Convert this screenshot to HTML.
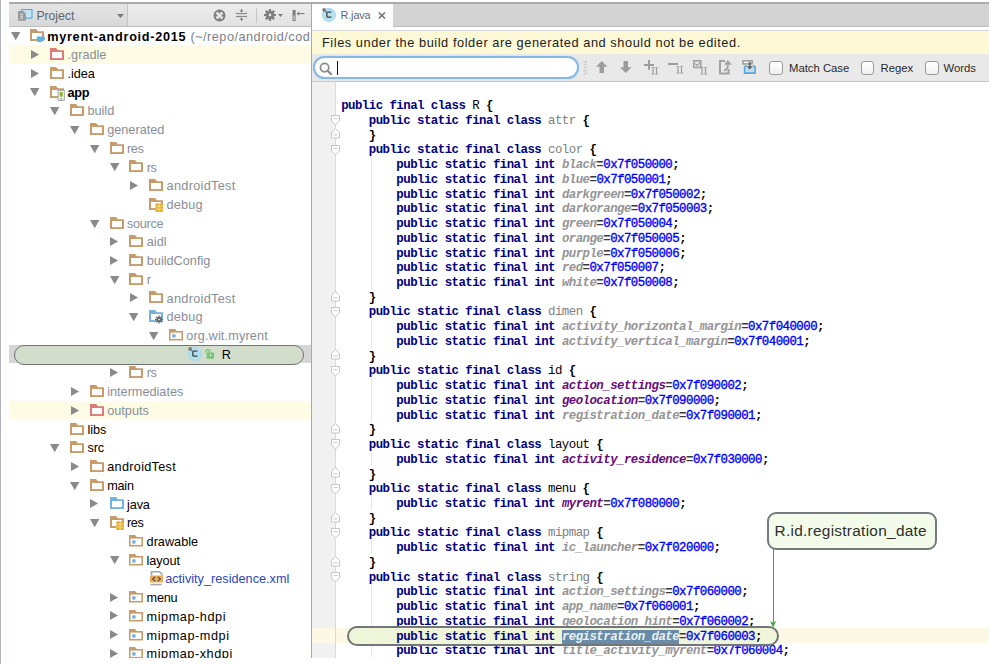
<!DOCTYPE html><html><head><meta charset="utf-8"><style>
*{margin:0;padding:0}
html,body{width:989px;height:664px;overflow:hidden;background:#fff;position:relative}
body{font-family:"Liberation Sans",sans-serif}
div{position:absolute}
.tt{font-size:12.7px;line-height:18.7px;white-space:nowrap}
.code{left:341.2px;top:99.2px;font-family:"Liberation Mono",monospace;font-size:12.4px;letter-spacing:-0.54px;line-height:14.74px;white-space:pre;font-weight:bold;color:#000}
.k{color:#000080}
.cg{color:#808080;font-weight:normal}
.cu{color:#000;font-weight:normal}
.fg{color:#959595;font-style:italic}
.fu{color:#660e7a;font-style:italic}
.fs{color:#e6f2f2;font-style:italic;background:#6a8ba8}
.n{color:#0000ff;font-weight:normal;-webkit-text-stroke:0.35px #0000ff}
.eq{color:#3a3a3a}
</style></head><body>
<div style="left:0;top:0;width:1px;height:664px;background:#aeb2ba"></div>
<div style="left:9px;top:2.2px;width:980px;height:1.8px;background:#ababab"></div>
<div style="left:9px;top:4px;width:302px;height:21.5px;background:linear-gradient(#ececec,#e2e2e2)"></div>
<div style="left:9px;top:4px;width:118px;height:21.5px;background:linear-gradient(#e4e4e4,#d8d8d8)"></div>
<div style="left:127px;top:4px;width:1px;height:21.5px;background:#c4c4c4"></div>
<div style="left:9px;top:25.5px;width:302px;height:1px;background:#bdbdbd"></div>
<svg style="position:absolute;left:18px;top:9px" width="15" height="13" viewBox="0 0 15 13"><rect x="3.5" y="0.5" width="10.5" height="8.6" fill="#c4e2f6" stroke="#5aa9de" stroke-width="1.1"/><path d="M0 2 H5.5 L8 4.5 V11.8 H0 Z" fill="#9a9a9a"/><path d="M2.3 5.2 H5 M2.3 7.2 H5 M2.3 9.2 H5" stroke="#e6e6e6" stroke-width="1"/></svg>
<div style="left:36.4px;top:4.9px;font-size:12.2px;line-height:22px;color:#5d6470">Project</div>
<svg style="position:absolute;left:116.5px;top:14px" width="7" height="4" viewBox="0 0 7 4"><path d="M0 0H7L3.5 4Z" fill="#7a7a7a"/></svg>
<svg style="position:absolute;left:213.3px;top:8.5px" width="13" height="13" viewBox="0 0 13 13"><circle cx="6.5" cy="6.5" r="5.0" fill="none" stroke="#7c7c7c" stroke-width="1.9"/><path d="M6.5 1.5 V4.3 M6.5 8.7 V11.5 M1.5 6.5 H4.3 M8.7 6.5 H11.5" stroke="#7c7c7c" stroke-width="2"/></svg>
<svg style="position:absolute;left:235.6px;top:9.3px" width="11" height="12" viewBox="0 0 11 12"><path d="M0.5 3.6 V4.6 H10.5 V3.6 M0.5 8.4 V7.4 H10.5 V8.4" fill="none" stroke="#7c7c7c" stroke-width="1"/><path d="M5.5 0 V2.4 M5.5 9.6 V12" stroke="#7c7c7c" stroke-width="1"/><path d="M3.4 1.6 H7.6 L5.5 3.6 Z M3.4 10.4 H7.6 L5.5 8.4 Z" fill="#7c7c7c"/></svg>
<div style="left:255.5px;top:7.6px;width:1px;height:15px;background:#c8c8c8"></div>
<svg style="position:absolute;left:264.1px;top:8.9px" width="12" height="12" viewBox="0 0 12 12"><g transform="translate(6 6)" fill="#7c7c7c"><rect x="-1.1" y="-5.9" width="2.2" height="11.8" transform="rotate(0)"/><rect x="-1.1" y="-5.9" width="2.2" height="11.8" transform="rotate(45)"/><rect x="-1.1" y="-5.9" width="2.2" height="11.8" transform="rotate(90)"/><rect x="-1.1" y="-5.9" width="2.2" height="11.8" transform="rotate(135)"/><circle r="4.1"/></g><circle cx="6" cy="6" r="1.4" fill="#e4e4e4"/></svg>
<svg style="position:absolute;left:278px;top:14px" width="5" height="3" viewBox="0 0 5 3"><path d="M0 0H5L2.5 3Z" fill="#7a7a7a"/></svg>
<svg style="position:absolute;left:291.5px;top:9.8px" width="13" height="11" viewBox="0 0 13 11"><rect x="0.6" y="0" width="3" height="11" fill="#7c7c7c"/><rect x="1.6" y="5.5" width="1" height="4.5" fill="#e4e4e4"/><path d="M6 3.6 H12.5" stroke="#7c7c7c" stroke-width="1.1"/><path d="M4.6 3.6 L7.2 1.4 V5.8 Z" fill="#7c7c7c"/></svg>
<svg style="position:absolute;left:10.5px;top:32.3px" width="10" height="9" viewBox="0 0 10 9"><path d="M0 0 H9.4 L4.7 8.2 Z" fill="#8a8a8a"/></svg>
<svg style="position:absolute;left:30.4px;top:29.400000000000002px" width="16" height="17" viewBox="0 0 16 17"><path d="M0 0 H6 L8 2.2 H14 V12 H0 Z" fill="#c69c6d"/><rect x="2" y="4" width="10" height="6.1" fill="#fff"/><path d="M6.8 7.4 H13.2 Q15 7.4 15 9.4 Q15 11.2 13 11.4 Q12 13.2 9.8 13.2 Q6.8 13.2 6.8 10.7 Z" fill="#5db1e0"/></svg>
<div class="tt" style="left:47.20px;top:27.50px;color:#000;font-weight:bold;letter-spacing:0.72px;">myrent-android-2015<span style="color:#7a7f88;font-weight:normal;letter-spacing:0.5px"> (~/repo/android/cod</span></div>
<div style="position:absolute;left:9px;top:45.02px;width:302px;height:18.72px;background:#fffce6"></div>
<svg style="position:absolute;left:30.900000000000002px;top:49.81999999999999px" width="9" height="10" viewBox="0 0 9 10"><path d="M0 0 V9 L8.1 4.5 Z" fill="#8a8a8a"/></svg>
<svg style="position:absolute;left:50.2px;top:48.12px" width="16" height="17" viewBox="0 0 16 17"><path d="M0 0 H6 L8 2.2 H14 V12 H0 Z" fill="#e07a7a"/><rect x="2" y="4" width="10" height="6.1" fill="#fff"/></svg>
<div class="tt" style="left:67.60px;top:46.22px;color:#898e97;font-weight:normal;">.gradle</div>
<svg style="position:absolute;left:30.900000000000002px;top:68.53999999999999px" width="9" height="10" viewBox="0 0 9 10"><path d="M0 0 V9 L8.1 4.5 Z" fill="#8a8a8a"/></svg>
<svg style="position:absolute;left:50.2px;top:66.83999999999999px" width="16" height="17" viewBox="0 0 16 17"><path d="M0 0 H6 L8 2.2 H14 V12 H0 Z" fill="#c69c6d"/><rect x="2" y="4" width="10" height="6.1" fill="#fff"/></svg>
<div class="tt" style="left:67.60px;top:64.94px;color:#000;font-weight:normal;letter-spacing:-0.1px;">.idea</div>
<svg style="position:absolute;left:30.3px;top:88.46px" width="10" height="9" viewBox="0 0 10 9"><path d="M0 0 H9.4 L4.7 8.2 Z" fill="#8a8a8a"/></svg>
<svg style="position:absolute;left:50.2px;top:85.55999999999999px" width="16" height="17" viewBox="0 0 16 17"><path d="M0 0 H6 L8 2.2 H14 V12 H0 Z" fill="#c69c6d"/><rect x="2" y="4" width="10" height="6.1" fill="#fff"/><rect x="8.1" y="4.3" width="6.2" height="10" rx="0.6" fill="#fff" stroke="#aaa" stroke-width="1.2"/><rect x="9.6" y="5.9" width="3.2" height="4.8" fill="#8db33a"/><rect x="10.2" y="12.2" width="2" height="1" fill="#777"/></svg>
<div class="tt" style="left:67.60px;top:83.66px;color:#000;font-weight:bold;letter-spacing:-0.35px;">app</div>
<svg style="position:absolute;left:50.10000000000001px;top:107.17999999999999px" width="10" height="9" viewBox="0 0 10 9"><path d="M0 0 H9.4 L4.7 8.2 Z" fill="#8a8a8a"/></svg>
<svg style="position:absolute;left:70.0px;top:104.27999999999999px" width="16" height="17" viewBox="0 0 16 17"><path d="M0 0 H6 L8 2.2 H14 V12 H0 Z" fill="#c69c6d"/><rect x="2" y="4" width="10" height="6.1" fill="#fff"/></svg>
<div class="tt" style="left:87.40px;top:102.38px;color:#898e97;font-weight:normal;">build</div>
<svg style="position:absolute;left:69.9px;top:125.89999999999999px" width="10" height="9" viewBox="0 0 10 9"><path d="M0 0 H9.4 L4.7 8.2 Z" fill="#8a8a8a"/></svg>
<svg style="position:absolute;left:89.80000000000001px;top:122.99999999999999px" width="16" height="17" viewBox="0 0 16 17"><path d="M0 0 H6 L8 2.2 H14 V12 H0 Z" fill="#c69c6d"/><rect x="2" y="4" width="10" height="6.1" fill="#fff"/></svg>
<div class="tt" style="left:107.20px;top:121.10px;color:#898e97;font-weight:normal;">generated</div>
<svg style="position:absolute;left:89.7px;top:144.62px" width="10" height="9" viewBox="0 0 10 9"><path d="M0 0 H9.4 L4.7 8.2 Z" fill="#8a8a8a"/></svg>
<svg style="position:absolute;left:109.6px;top:141.72px" width="16" height="17" viewBox="0 0 16 17"><path d="M0 0 H6 L8 2.2 H14 V12 H0 Z" fill="#c69c6d"/><rect x="2" y="4" width="10" height="6.1" fill="#fff"/></svg>
<div class="tt" style="left:127.00px;top:139.82px;color:#898e97;font-weight:normal;letter-spacing:-0.4px;">res</div>
<svg style="position:absolute;left:109.5px;top:163.34px" width="10" height="9" viewBox="0 0 10 9"><path d="M0 0 H9.4 L4.7 8.2 Z" fill="#8a8a8a"/></svg>
<svg style="position:absolute;left:129.4px;top:160.44px" width="16" height="17" viewBox="0 0 16 17"><path d="M0 0 H6 L8 2.2 H14 V12 H0 Z" fill="#c69c6d"/><rect x="2" y="4" width="10" height="6.1" fill="#fff"/></svg>
<div class="tt" style="left:146.80px;top:158.54px;color:#898e97;font-weight:normal;letter-spacing:-0.5px;">rs</div>
<svg style="position:absolute;left:129.90000000000003px;top:180.86px" width="9" height="10" viewBox="0 0 9 10"><path d="M0 0 V9 L8.1 4.5 Z" fill="#8a8a8a"/></svg>
<svg style="position:absolute;left:149.20000000000002px;top:179.16px" width="16" height="17" viewBox="0 0 16 17"><path d="M0 0 H6 L8 2.2 H14 V12 H0 Z" fill="#c69c6d"/><rect x="2" y="4" width="10" height="6.1" fill="#fff"/></svg>
<div class="tt" style="left:166.60px;top:177.26px;color:#898e97;font-weight:normal;letter-spacing:0.3px;">androidTest</div>
<svg style="position:absolute;left:149.20000000000002px;top:197.88px" width="16" height="17" viewBox="0 0 16 17"><path d="M0 0 H6 L8 2.2 H14 V12 H0 Z" fill="#c69c6d"/><rect x="2" y="4" width="10" height="6.1" fill="#fff"/><rect x="6.4" y="5.4" width="7.4" height="8.6" fill="#e6ae28"/><path d="M6.4 8.2 H13.8 M6.4 11.1 H13.8 M10.1 5.4 V14" stroke="#f8e49a" stroke-width="0.8"/></svg>
<div class="tt" style="left:166.60px;top:195.98px;color:#898e97;font-weight:normal;letter-spacing:0.2px;">debug</div>
<svg style="position:absolute;left:89.7px;top:219.5px" width="10" height="9" viewBox="0 0 10 9"><path d="M0 0 H9.4 L4.7 8.2 Z" fill="#8a8a8a"/></svg>
<svg style="position:absolute;left:109.6px;top:216.6px" width="16" height="17" viewBox="0 0 16 17"><path d="M0 0 H6 L8 2.2 H14 V12 H0 Z" fill="#c69c6d"/><rect x="2" y="4" width="10" height="6.1" fill="#fff"/></svg>
<div class="tt" style="left:127.00px;top:214.70px;color:#898e97;font-weight:normal;letter-spacing:-0.3px;">source</div>
<svg style="position:absolute;left:110.1px;top:237.02px" width="9" height="10" viewBox="0 0 9 10"><path d="M0 0 V9 L8.1 4.5 Z" fill="#8a8a8a"/></svg>
<svg style="position:absolute;left:129.4px;top:235.32px" width="16" height="17" viewBox="0 0 16 17"><path d="M0 0 H6 L8 2.2 H14 V12 H0 Z" fill="#c69c6d"/><rect x="2" y="4" width="10" height="6.1" fill="#fff"/></svg>
<div class="tt" style="left:146.80px;top:233.42px;color:#898e97;font-weight:normal;">aidl</div>
<svg style="position:absolute;left:110.1px;top:255.74px" width="9" height="10" viewBox="0 0 9 10"><path d="M0 0 V9 L8.1 4.5 Z" fill="#8a8a8a"/></svg>
<svg style="position:absolute;left:129.4px;top:254.04px" width="16" height="17" viewBox="0 0 16 17"><path d="M0 0 H6 L8 2.2 H14 V12 H0 Z" fill="#c69c6d"/><rect x="2" y="4" width="10" height="6.1" fill="#fff"/></svg>
<div class="tt" style="left:146.80px;top:252.14px;color:#898e97;font-weight:normal;">buildConfig</div>
<svg style="position:absolute;left:109.5px;top:275.65999999999997px" width="10" height="9" viewBox="0 0 10 9"><path d="M0 0 H9.4 L4.7 8.2 Z" fill="#8a8a8a"/></svg>
<svg style="position:absolute;left:129.4px;top:272.76px" width="16" height="17" viewBox="0 0 16 17"><path d="M0 0 H6 L8 2.2 H14 V12 H0 Z" fill="#c69c6d"/><rect x="2" y="4" width="10" height="6.1" fill="#fff"/></svg>
<div class="tt" style="left:146.80px;top:270.86px;color:#898e97;font-weight:normal;">r</div>
<svg style="position:absolute;left:129.90000000000003px;top:293.18px" width="9" height="10" viewBox="0 0 9 10"><path d="M0 0 V9 L8.1 4.5 Z" fill="#8a8a8a"/></svg>
<svg style="position:absolute;left:149.20000000000002px;top:291.48px" width="16" height="17" viewBox="0 0 16 17"><path d="M0 0 H6 L8 2.2 H14 V12 H0 Z" fill="#c69c6d"/><rect x="2" y="4" width="10" height="6.1" fill="#fff"/></svg>
<div class="tt" style="left:166.60px;top:289.58px;color:#898e97;font-weight:normal;letter-spacing:0.3px;">androidTest</div>
<svg style="position:absolute;left:129.3px;top:313.09999999999997px" width="10" height="9" viewBox="0 0 10 9"><path d="M0 0 H9.4 L4.7 8.2 Z" fill="#8a8a8a"/></svg>
<svg style="position:absolute;left:149.20000000000002px;top:310.2px" width="16" height="17" viewBox="0 0 16 17"><path d="M0 0 H6 L8 2.2 H14 V12 H0 Z" fill="#74b4dc"/><rect x="2" y="4" width="10" height="6.1" fill="#fff"/><g transform="translate(10 9.5)" fill="#666"><rect x="-0.7" y="-4" width="1.4" height="8" transform="rotate(0)"/><rect x="-0.7" y="-4" width="1.4" height="8" transform="rotate(45)"/><rect x="-0.7" y="-4" width="1.4" height="8" transform="rotate(90)"/><rect x="-0.7" y="-4" width="1.4" height="8" transform="rotate(135)"/><circle r="2.2"/></g><circle cx="10" cy="9.5" r="0.8" fill="#fff"/></svg>
<div class="tt" style="left:166.60px;top:308.30px;color:#898e97;font-weight:normal;letter-spacing:0.2px;">debug</div>
<svg style="position:absolute;left:149.1px;top:331.82px" width="10" height="9" viewBox="0 0 10 9"><path d="M0 0 H9.4 L4.7 8.2 Z" fill="#8a8a8a"/></svg>
<svg style="position:absolute;left:168.7px;top:329.21999999999997px" width="14" height="12" viewBox="0 0 14 12"><path d="M0 0 H6 L7.8 2 H14 V11.5 H0 Z" fill="#c69c6d"/><rect x="1.6" y="3.6" width="10.8" height="6.3" fill="#fff"/><circle cx="4.9" cy="6.9" r="1.9" fill="#74b2dc"/></svg>
<div class="tt" style="left:186.20px;top:327.02px;color:#898e97;font-weight:normal;letter-spacing:0.14px;">org.wit.myrent</div>
<div style="position:absolute;left:9px;top:344.54px;width:302px;height:18.72px;background:#d6d6d6"></div>
<div style="position:absolute;left:13.5px;top:345.34px;width:290px;height:19.7px;box-sizing:border-box;border:1.9px solid #6f7377;border-radius:10px;background:#d3ddcc"></div>
<svg style="position:absolute;left:188.0px;top:347.34000000000003px" width="15" height="15" viewBox="0 0 15 15"><circle cx="6.9" cy="6.9" r="6.9" fill="#b2e0ef"/><circle cx="6.9" cy="6.9" r="6.5" fill="none" stroke="#a2d4ee" stroke-width="0.8"/><path d="M9.4 4.05 H5.7 Q4.85 4.05 4.85 4.9 V8.3 Q4.85 9.15 5.7 9.15 H9.4" fill="none" stroke="#404040" stroke-width="1.3"/><path d="M2 1.8 L4.6 4.4" stroke="#6a6a6a" stroke-width="1.1"/><circle cx="2.1" cy="1.9" r="1.8" fill="#7a7a7a"/></svg>
<svg style="position:absolute;left:205.4px;top:349.44px" width="10" height="10" viewBox="0 0 10 10"><path d="M1.2 3.6 V2.4 Q1.2 0.8 2.9 0.8 Q4.6 0.8 4.6 2.4 V3.8" fill="none" stroke="#78c678" stroke-width="1.5"/><rect x="1.6" y="3.5" width="7.5" height="6.2" rx="0.6" fill="#78c678"/><path d="M4.4 5.6 H6.4 L5.4 7.4 Z" fill="#e8f4e8"/></svg>
<div class="tt" style="left:221.80px;top:345.74px;color:#000;font-weight:normal;">R</div>
<svg style="position:absolute;left:110.1px;top:368.06px" width="9" height="10" viewBox="0 0 9 10"><path d="M0 0 V9 L8.1 4.5 Z" fill="#8a8a8a"/></svg>
<svg style="position:absolute;left:129.4px;top:366.36px" width="16" height="17" viewBox="0 0 16 17"><path d="M0 0 H6 L8 2.2 H14 V12 H0 Z" fill="#c69c6d"/><rect x="2" y="4" width="10" height="6.1" fill="#fff"/></svg>
<div class="tt" style="left:146.80px;top:364.46px;color:#898e97;font-weight:normal;letter-spacing:-0.5px;">rs</div>
<svg style="position:absolute;left:70.5px;top:386.78px" width="9" height="10" viewBox="0 0 9 10"><path d="M0 0 V9 L8.1 4.5 Z" fill="#8a8a8a"/></svg>
<svg style="position:absolute;left:89.80000000000001px;top:385.08px" width="16" height="17" viewBox="0 0 16 17"><path d="M0 0 H6 L8 2.2 H14 V12 H0 Z" fill="#c69c6d"/><rect x="2" y="4" width="10" height="6.1" fill="#fff"/></svg>
<div class="tt" style="left:107.20px;top:383.18px;color:#898e97;font-weight:normal;">intermediates</div>
<div style="position:absolute;left:9px;top:400.70px;width:302px;height:18.72px;background:#fffce6"></div>
<svg style="position:absolute;left:70.5px;top:405.5px" width="9" height="10" viewBox="0 0 9 10"><path d="M0 0 V9 L8.1 4.5 Z" fill="#8a8a8a"/></svg>
<svg style="position:absolute;left:89.80000000000001px;top:403.8px" width="16" height="17" viewBox="0 0 16 17"><path d="M0 0 H6 L8 2.2 H14 V12 H0 Z" fill="#e07a7a"/><rect x="2" y="4" width="10" height="6.1" fill="#fff"/></svg>
<div class="tt" style="left:107.20px;top:401.90px;color:#898e97;font-weight:normal;">outputs</div>
<svg style="position:absolute;left:70.0px;top:422.52000000000004px" width="16" height="17" viewBox="0 0 16 17"><path d="M0 0 H6 L8 2.2 H14 V12 H0 Z" fill="#c69c6d"/><rect x="2" y="4" width="10" height="6.1" fill="#fff"/></svg>
<div class="tt" style="left:87.40px;top:420.62px;color:#000;font-weight:normal;">libs</div>
<svg style="position:absolute;left:50.10000000000001px;top:444.14px" width="10" height="9" viewBox="0 0 10 9"><path d="M0 0 H9.4 L4.7 8.2 Z" fill="#8a8a8a"/></svg>
<svg style="position:absolute;left:70.0px;top:441.24px" width="16" height="17" viewBox="0 0 16 17"><path d="M0 0 H6 L8 2.2 H14 V12 H0 Z" fill="#c69c6d"/><rect x="2" y="4" width="10" height="6.1" fill="#fff"/></svg>
<div class="tt" style="left:87.40px;top:439.34px;color:#000;font-weight:normal;letter-spacing:-0.1px;">src</div>
<svg style="position:absolute;left:70.5px;top:461.65999999999997px" width="9" height="10" viewBox="0 0 9 10"><path d="M0 0 V9 L8.1 4.5 Z" fill="#8a8a8a"/></svg>
<svg style="position:absolute;left:89.80000000000001px;top:459.96px" width="16" height="17" viewBox="0 0 16 17"><path d="M0 0 H6 L8 2.2 H14 V12 H0 Z" fill="#c69c6d"/><rect x="2" y="4" width="10" height="6.1" fill="#fff"/></svg>
<div class="tt" style="left:107.20px;top:458.06px;color:#000;font-weight:normal;letter-spacing:0.3px;">androidTest</div>
<svg style="position:absolute;left:69.9px;top:481.58px" width="10" height="9" viewBox="0 0 10 9"><path d="M0 0 H9.4 L4.7 8.2 Z" fill="#8a8a8a"/></svg>
<svg style="position:absolute;left:89.80000000000001px;top:478.68px" width="16" height="17" viewBox="0 0 16 17"><path d="M0 0 H6 L8 2.2 H14 V12 H0 Z" fill="#c69c6d"/><rect x="2" y="4" width="10" height="6.1" fill="#fff"/></svg>
<div class="tt" style="left:107.20px;top:476.78px;color:#000;font-weight:normal;letter-spacing:-0.24px;">main</div>
<svg style="position:absolute;left:90.3px;top:499.1px" width="9" height="10" viewBox="0 0 9 10"><path d="M0 0 V9 L8.1 4.5 Z" fill="#8a8a8a"/></svg>
<svg style="position:absolute;left:109.6px;top:497.40000000000003px" width="16" height="17" viewBox="0 0 16 17"><path d="M0 0 H6 L8 2.2 H14 V12 H0 Z" fill="#74b4dc"/><rect x="2" y="4" width="10" height="6.1" fill="#fff"/></svg>
<div class="tt" style="left:127.00px;top:495.50px;color:#000;font-weight:normal;letter-spacing:-0.12px;">java</div>
<svg style="position:absolute;left:89.7px;top:519.02px" width="10" height="9" viewBox="0 0 10 9"><path d="M0 0 H9.4 L4.7 8.2 Z" fill="#8a8a8a"/></svg>
<svg style="position:absolute;left:109.6px;top:516.12px" width="16" height="17" viewBox="0 0 16 17"><path d="M0 0 H6 L8 2.2 H14 V12 H0 Z" fill="#c69c6d"/><rect x="2" y="4" width="10" height="6.1" fill="#fff"/><rect x="6.4" y="5.4" width="7.4" height="8.6" fill="#e6ae28"/><path d="M6.4 8.2 H13.8 M6.4 11.1 H13.8 M10.1 5.4 V14" stroke="#f8e49a" stroke-width="0.8"/></svg>
<div class="tt" style="left:127.00px;top:514.22px;color:#000;font-weight:normal;letter-spacing:-0.4px;">res</div>
<svg style="position:absolute;left:129.1px;top:535.1399999999999px" width="14" height="12" viewBox="0 0 14 12"><path d="M0 0 H6 L7.8 2 H14 V11.5 H0 Z" fill="#c69c6d"/><rect x="1.6" y="3.6" width="10.8" height="6.3" fill="#fff"/><circle cx="4.9" cy="6.9" r="1.9" fill="#74b2dc"/></svg>
<div class="tt" style="left:146.60px;top:532.94px;color:#000;font-weight:normal;">drawable</div>
<svg style="position:absolute;left:109.5px;top:556.4599999999999px" width="10" height="9" viewBox="0 0 10 9"><path d="M0 0 H9.4 L4.7 8.2 Z" fill="#8a8a8a"/></svg>
<svg style="position:absolute;left:129.1px;top:553.8599999999999px" width="14" height="12" viewBox="0 0 14 12"><path d="M0 0 H6 L7.8 2 H14 V11.5 H0 Z" fill="#c69c6d"/><rect x="1.6" y="3.6" width="10.8" height="6.3" fill="#fff"/><circle cx="4.9" cy="6.9" r="1.9" fill="#74b2dc"/></svg>
<div class="tt" style="left:146.60px;top:551.66px;color:#000;font-weight:normal;letter-spacing:-0.1px;">layout</div>
<svg style="position:absolute;left:150.20000000000002px;top:570.78px" width="14" height="15" viewBox="0 0 14 15"><path d="M1.5 0.8 H9.5 L12 3.3 V4.5" fill="none" stroke="#a6a6a6" stroke-width="1.6"/><path d="M1.5 0 V4.5" stroke="#a6a6a6" stroke-width="1.6"/><rect x="0" y="4.5" width="13" height="7" fill="#f1ad56"/><path d="M5.2 5.7 L2.7 8 L5.2 10.3 M7.8 5.7 L10.3 8 L7.8 10.3" fill="none" stroke="#585858" stroke-width="1.4"/><rect x="0.5" y="12.8" width="11" height="1.5" fill="#a6a6a6"/></svg>
<div class="tt" style="left:165.20px;top:570.38px;color:#2a46b8;font-weight:normal;">activity_residence.xml</div>
<svg style="position:absolute;left:110.1px;top:592.6999999999998px" width="9" height="10" viewBox="0 0 9 10"><path d="M0 0 V9 L8.1 4.5 Z" fill="#8a8a8a"/></svg>
<svg style="position:absolute;left:129.1px;top:591.2999999999998px" width="14" height="12" viewBox="0 0 14 12"><path d="M0 0 H6 L7.8 2 H14 V11.5 H0 Z" fill="#c69c6d"/><rect x="1.6" y="3.6" width="10.8" height="6.3" fill="#fff"/><circle cx="4.9" cy="6.9" r="1.9" fill="#74b2dc"/></svg>
<div class="tt" style="left:146.60px;top:589.10px;color:#000;font-weight:normal;letter-spacing:-0.25px;">menu</div>
<svg style="position:absolute;left:110.1px;top:611.4199999999998px" width="9" height="10" viewBox="0 0 9 10"><path d="M0 0 V9 L8.1 4.5 Z" fill="#8a8a8a"/></svg>
<svg style="position:absolute;left:129.1px;top:610.0199999999999px" width="14" height="12" viewBox="0 0 14 12"><path d="M0 0 H6 L7.8 2 H14 V11.5 H0 Z" fill="#c69c6d"/><rect x="1.6" y="3.6" width="10.8" height="6.3" fill="#fff"/><circle cx="4.9" cy="6.9" r="1.9" fill="#74b2dc"/></svg>
<div class="tt" style="left:146.60px;top:607.82px;color:#000;font-weight:normal;letter-spacing:0.56px;">mipmap-hdpi</div>
<svg style="position:absolute;left:110.1px;top:630.1399999999999px" width="9" height="10" viewBox="0 0 9 10"><path d="M0 0 V9 L8.1 4.5 Z" fill="#8a8a8a"/></svg>
<svg style="position:absolute;left:129.1px;top:628.7399999999999px" width="14" height="12" viewBox="0 0 14 12"><path d="M0 0 H6 L7.8 2 H14 V11.5 H0 Z" fill="#c69c6d"/><rect x="1.6" y="3.6" width="10.8" height="6.3" fill="#fff"/><circle cx="4.9" cy="6.9" r="1.9" fill="#74b2dc"/></svg>
<div class="tt" style="left:146.60px;top:626.54px;color:#000;font-weight:normal;letter-spacing:0.56px;">mipmap-mdpi</div>
<svg style="position:absolute;left:110.1px;top:648.8599999999999px" width="9" height="10" viewBox="0 0 9 10"><path d="M0 0 V9 L8.1 4.5 Z" fill="#8a8a8a"/></svg>
<svg style="position:absolute;left:129.1px;top:647.4599999999999px" width="14" height="12" viewBox="0 0 14 12"><path d="M0 0 H6 L7.8 2 H14 V11.5 H0 Z" fill="#c69c6d"/><rect x="1.6" y="3.6" width="10.8" height="6.3" fill="#fff"/><circle cx="4.9" cy="6.9" r="1.9" fill="#74b2dc"/></svg>
<div class="tt" style="left:146.60px;top:645.26px;color:#000;font-weight:normal;letter-spacing:0.54px;">mipmap-xhdpi</div>
<div style="left:311px;top:4px;width:1px;height:654px;background:#a8a8a8"></div>
<div style="left:312px;top:4px;width:677px;height:22px;background:#d3d3d3"></div>
<div style="left:393px;top:25.5px;width:596px;height:1px;background:#bcbcbc"></div>
<div style="left:312px;top:4px;width:81px;height:26px;background:#fff"></div>
<svg style="position:absolute;left:322.1px;top:7.9px" width="15" height="15" viewBox="0 0 15 15"><circle cx="6.9" cy="6.9" r="6.9" fill="#b6e0f3"/><circle cx="6.9" cy="6.9" r="6.5" fill="none" stroke="#a2d4ee" stroke-width="0.8"/><path d="M9.4 4.05 H5.7 Q4.85 4.05 4.85 4.9 V8.3 Q4.85 9.15 5.7 9.15 H9.4" fill="none" stroke="#404040" stroke-width="1.3"/><path d="M2 1.8 L4.6 4.4" stroke="#6a6a6a" stroke-width="1.1"/><circle cx="2.1" cy="1.9" r="1.8" fill="#7a7a7a"/></svg>
<div style="left:340.5px;top:4.9px;font-size:10.8px;line-height:21px;color:#5b6678;letter-spacing:-0.1px">R.java</div>
<svg style="position:absolute;left:378px;top:12px" width="8" height="7" viewBox="0 0 8 7"><path d="M0.8 0.5 L7 6.5 M7 0.5 L0.8 6.5" stroke="#707070" stroke-width="1.5"/></svg>
<div style="left:312px;top:29.5px;width:677px;height:1px;background:#dadada"></div>
<div style="left:312px;top:30.5px;width:677px;height:23.5px;background:#fdf9d6"></div>
<div style="left:322px;top:30.5px;font-size:12.8px;line-height:23.5px;color:#1c1c1c;letter-spacing:0.55px;white-space:nowrap">Files under the build folder are generated and should not be edited.</div>
<div style="left:312px;top:54px;width:677px;height:27px;background:#e9e9e9"></div>
<div style="left:312px;top:80.8px;width:677px;height:1px;background:#c8c8c8"></div>
<div style="left:313.2px;top:56.3px;width:265.8px;height:22.7px;box-sizing:border-box;border:2.6px solid #86b9e6;border-radius:11.5px;background:#fff;box-shadow:0 0 1.2px #a9cdee"></div>
<svg style="position:absolute;left:319px;top:61.5px" width="14" height="14" viewBox="0 0 14 14"><circle cx="5.6" cy="5.6" r="4.2" fill="none" stroke="#8c8c8c" stroke-width="1.7"/><path d="M8.6 8.6 L12.2 12.2" stroke="#8c8c8c" stroke-width="2.2" stroke-linecap="round"/></svg>
<div style="left:336.6px;top:61px;width:1.3px;height:14px;background:#111"></div>
<svg style="position:absolute;left:583px;top:59.8px" width="5" height="16" viewBox="0 0 5 16"><path d="M0.6 2.6 L4 0.6" stroke="#c2c2c2" stroke-width="1.1"/><path d="M0.6 5.6 L4 3.6" stroke="#c2c2c2" stroke-width="1.1"/><path d="M0.6 8.6 L4 6.6" stroke="#c2c2c2" stroke-width="1.1"/><path d="M0.6 11.6 L4 9.6" stroke="#c2c2c2" stroke-width="1.1"/><path d="M0.6 14.6 L4 12.6" stroke="#c2c2c2" stroke-width="1.1"/></svg>
<svg style="position:absolute;left:595.5px;top:61px" width="12" height="12" viewBox="0 0 12 12"><path d="M5.75 0 L11.5 5.8 H8 V12 H3.5 V5.8 H0 Z" fill="#9c9c9c"/></svg>
<svg style="position:absolute;left:620px;top:61px" width="12" height="12" viewBox="0 0 12 12"><path d="M5.75 12 L11.5 6.2 H8 V0 H3.5 V6.2 H0 Z" fill="#9c9c9c"/></svg>
<svg style="position:absolute;left:643.6px;top:60px" width="10" height="10" viewBox="0 0 10 10"><path d="M0 5 H10 M5 0 V9.8" stroke="#9c9c9c" stroke-width="2"/></svg><svg style="position:absolute;left:651.4px;top:67px" width="8" height="8" viewBox="0 0 8 8"><path d="M2 0.5 V7 M5.5 0.5 V7" stroke="#9c9c9c" stroke-width="1.2"/><path d="M0.3 0.4 H7.3 M0.3 7.1 H7.3" stroke="#9c9c9c" stroke-width="0.8" stroke-dasharray="3.2 0.6"/></svg>
<svg style="position:absolute;left:668px;top:63px" width="10" height="2" viewBox="0 0 10 2"><path d="M0 1 H10" stroke="#9c9c9c" stroke-width="2"/></svg><svg style="position:absolute;left:675.8px;top:66.2px" width="8" height="8" viewBox="0 0 8 8"><path d="M2 0.5 V7 M5.5 0.5 V7" stroke="#9c9c9c" stroke-width="1.2"/><path d="M0.3 0.4 H7.3 M0.3 7.1 H7.3" stroke="#9c9c9c" stroke-width="0.8" stroke-dasharray="3.2 0.6"/></svg>
<svg style="position:absolute;left:692.5px;top:60px" width="10" height="9" viewBox="0 0 10 9"><rect x="0.8" y="0.8" width="7" height="6.6" fill="none" stroke="#9c9c9c" stroke-width="1.5"/><path d="M2.2 3.6 L4.2 5.6 L7.8 1.6" fill="none" stroke="#9c9c9c" stroke-width="1.2"/><rect x="1.6" y="7.6" width="7.4" height="0.8" fill="#c2c2c2"/></svg><svg style="position:absolute;left:700.3px;top:67px" width="8" height="8" viewBox="0 0 8 8"><path d="M2 0.5 V7 M5.5 0.5 V7" stroke="#9c9c9c" stroke-width="1.2"/><path d="M0.3 0.4 H7.3 M0.3 7.1 H7.3" stroke="#9c9c9c" stroke-width="0.8" stroke-dasharray="3.2 0.6"/></svg>
<svg style="position:absolute;left:718.5px;top:59.5px" width="14" height="15" viewBox="0 0 14 15"><path d="M6 1 H1 V13.6 H9.6 V9" fill="none" stroke="#a2a2a2" stroke-width="2"/><path d="M5 10.5 Q9 10 8.8 4.5" fill="none" stroke="#a2a2a2" stroke-width="2"/><path d="M5 4.8 L8.8 0 L12.8 4.8 Z" fill="#a2a2a2"/></svg>
<svg style="position:absolute;left:742px;top:60px" width="14" height="14" viewBox="0 0 14 14"><rect x="0.9" y="0.9" width="9.2" height="3" fill="#fff" stroke="#999" stroke-width="1.5"/><path d="M2.6 6.2 V13.1 H13.1 V6.2" fill="#c2dff0" stroke="#5aa6d6" stroke-width="1.6"/><rect x="2.6" y="5.4" width="2" height="1.6" fill="#5aa6d6"/><rect x="11.1" y="5.4" width="2" height="1.6" fill="#5aa6d6"/><path d="M7.7 2 V7" stroke="#666" stroke-width="1.8"/><path d="M4.4 6.2 H11 L7.7 9.6 Z" fill="#666"/></svg>
<div style="left:769px;top:61.2px;width:13.5px;height:13.5px;box-sizing:border-box;border:1px solid #9a9a9a;border-radius:3px;background:linear-gradient(#fff,#f0f0f0)"></div>
<div style="left:789px;top:54.8px;font-size:11.3px;line-height:26px;color:#2a2a2a;white-space:nowrap">Match Case</div>
<div style="left:860.5px;top:61.2px;width:13.5px;height:13.5px;box-sizing:border-box;border:1px solid #9a9a9a;border-radius:3px;background:linear-gradient(#fff,#f0f0f0)"></div>
<div style="left:880.5px;top:54.8px;font-size:11.3px;line-height:26px;color:#2a2a2a;white-space:nowrap">Regex</div>
<div style="left:925px;top:61.2px;width:13.5px;height:13.5px;box-sizing:border-box;border:1px solid #9a9a9a;border-radius:3px;background:linear-gradient(#fff,#f0f0f0)"></div>
<div style="left:943.5px;top:54.8px;font-size:11.3px;line-height:26px;color:#2a2a2a;white-space:nowrap">Words</div>
<div style="left:312px;top:81.8px;width:23px;height:576.2px;background:#f1f1f1"></div>
<div style="left:312px;top:627.94px;width:677px;height:14.74px;background:#fdf8e6"></div>
<div style="left:335px;top:81.8px;width:1px;height:576.2px;background:#dadada"></div>
<div style="position:absolute;left:371px;top:156.26px;width:1px;height:132.66px;background:#e8e8e8"></div>
<div style="position:absolute;left:371px;top:318.40px;width:1px;height:29.48px;background:#e8e8e8"></div>
<div style="position:absolute;left:371px;top:377.36px;width:1px;height:44.22px;background:#e8e8e8"></div>
<div style="position:absolute;left:371px;top:451.06px;width:1px;height:14.74px;background:#e8e8e8"></div>
<div style="position:absolute;left:371px;top:495.28px;width:1px;height:14.74px;background:#e8e8e8"></div>
<div style="position:absolute;left:371px;top:539.50px;width:1px;height:14.74px;background:#e8e8e8"></div>
<div style="position:absolute;left:371px;top:583.72px;width:1px;height:73.70px;background:#e8e8e8"></div>
<svg style="position:absolute;left:331px;top:115.03999999999999px" width="9" height="11" viewBox="0 0 9 11"><path d="M0.5 0.5 H8.5 V6 L4.5 10 L0.5 6 Z" fill="#fff" stroke="#c6c6c6" stroke-width="1"/><path d="M2.5 3.6 H6.5" stroke="#c8c8c8" stroke-width="1"/></svg>
<svg style="position:absolute;left:331px;top:144.51999999999998px" width="9" height="11" viewBox="0 0 9 11"><path d="M0.5 0.5 H8.5 V6 L4.5 10 L0.5 6 Z" fill="#fff" stroke="#c6c6c6" stroke-width="1"/><path d="M2.5 3.6 H6.5" stroke="#c8c8c8" stroke-width="1"/></svg>
<svg style="position:absolute;left:331px;top:306.66px" width="9" height="11" viewBox="0 0 9 11"><path d="M0.5 0.5 H8.5 V6 L4.5 10 L0.5 6 Z" fill="#fff" stroke="#c6c6c6" stroke-width="1"/><path d="M2.5 3.6 H6.5" stroke="#c8c8c8" stroke-width="1"/></svg>
<svg style="position:absolute;left:331px;top:365.62px" width="9" height="11" viewBox="0 0 9 11"><path d="M0.5 0.5 H8.5 V6 L4.5 10 L0.5 6 Z" fill="#fff" stroke="#c6c6c6" stroke-width="1"/><path d="M2.5 3.6 H6.5" stroke="#c8c8c8" stroke-width="1"/></svg>
<svg style="position:absolute;left:331px;top:439.32px" width="9" height="11" viewBox="0 0 9 11"><path d="M0.5 0.5 H8.5 V6 L4.5 10 L0.5 6 Z" fill="#fff" stroke="#c6c6c6" stroke-width="1"/><path d="M2.5 3.6 H6.5" stroke="#c8c8c8" stroke-width="1"/></svg>
<svg style="position:absolute;left:331px;top:483.54px" width="9" height="11" viewBox="0 0 9 11"><path d="M0.5 0.5 H8.5 V6 L4.5 10 L0.5 6 Z" fill="#fff" stroke="#c6c6c6" stroke-width="1"/><path d="M2.5 3.6 H6.5" stroke="#c8c8c8" stroke-width="1"/></svg>
<svg style="position:absolute;left:331px;top:527.76px" width="9" height="11" viewBox="0 0 9 11"><path d="M0.5 0.5 H8.5 V6 L4.5 10 L0.5 6 Z" fill="#fff" stroke="#c6c6c6" stroke-width="1"/><path d="M2.5 3.6 H6.5" stroke="#c8c8c8" stroke-width="1"/></svg>
<svg style="position:absolute;left:331px;top:571.98px" width="9" height="11" viewBox="0 0 9 11"><path d="M0.5 0.5 H8.5 V6 L4.5 10 L0.5 6 Z" fill="#fff" stroke="#c6c6c6" stroke-width="1"/><path d="M2.5 3.6 H6.5" stroke="#c8c8c8" stroke-width="1"/></svg>
<svg style="position:absolute;left:331px;top:128.38px" width="9" height="11" viewBox="0 0 9 11"><path d="M0.5 10 H8.5 V4.5 L4.5 0.5 L0.5 4.5 Z" fill="#fff" stroke="#c6c6c6" stroke-width="1"/><path d="M2.5 6.9 H6.5" stroke="#c8c8c8" stroke-width="1"/></svg>
<svg style="position:absolute;left:331px;top:290.52000000000004px" width="9" height="11" viewBox="0 0 9 11"><path d="M0.5 10 H8.5 V4.5 L4.5 0.5 L0.5 4.5 Z" fill="#fff" stroke="#c6c6c6" stroke-width="1"/><path d="M2.5 6.9 H6.5" stroke="#c8c8c8" stroke-width="1"/></svg>
<svg style="position:absolute;left:331px;top:349.48px" width="9" height="11" viewBox="0 0 9 11"><path d="M0.5 10 H8.5 V4.5 L4.5 0.5 L0.5 4.5 Z" fill="#fff" stroke="#c6c6c6" stroke-width="1"/><path d="M2.5 6.9 H6.5" stroke="#c8c8c8" stroke-width="1"/></svg>
<svg style="position:absolute;left:331px;top:423.18000000000006px" width="9" height="11" viewBox="0 0 9 11"><path d="M0.5 10 H8.5 V4.5 L4.5 0.5 L0.5 4.5 Z" fill="#fff" stroke="#c6c6c6" stroke-width="1"/><path d="M2.5 6.9 H6.5" stroke="#c8c8c8" stroke-width="1"/></svg>
<svg style="position:absolute;left:331px;top:467.40000000000003px" width="9" height="11" viewBox="0 0 9 11"><path d="M0.5 10 H8.5 V4.5 L4.5 0.5 L0.5 4.5 Z" fill="#fff" stroke="#c6c6c6" stroke-width="1"/><path d="M2.5 6.9 H6.5" stroke="#c8c8c8" stroke-width="1"/></svg>
<svg style="position:absolute;left:331px;top:511.62000000000006px" width="9" height="11" viewBox="0 0 9 11"><path d="M0.5 10 H8.5 V4.5 L4.5 0.5 L0.5 4.5 Z" fill="#fff" stroke="#c6c6c6" stroke-width="1"/><path d="M2.5 6.9 H6.5" stroke="#c8c8c8" stroke-width="1"/></svg>
<svg style="position:absolute;left:331px;top:555.84px" width="9" height="11" viewBox="0 0 9 11"><path d="M0.5 10 H8.5 V4.5 L4.5 0.5 L0.5 4.5 Z" fill="#fff" stroke="#c6c6c6" stroke-width="1"/><path d="M2.5 6.9 H6.5" stroke="#c8c8c8" stroke-width="1"/></svg>
<div style="left:346.5px;top:626.44px;width:432px;height:19.5px;border-radius:10px;background:#eff5d9"></div>
<div class="code"><span class="k">public final class</span> <span class="cu">R</span> {
    <span class="k">public static final class</span> <span class="cg">attr</span> {
    }
    <span class="k">public static final class</span> <span class="cg">color</span> {
        <span class="k">public static final int</span> <i class="fg">black</i><span class="eq">=</span><span class="n">0x7f050000</span>;
        <span class="k">public static final int</span> <i class="fg">blue</i><span class="eq">=</span><span class="n">0x7f050001</span>;
        <span class="k">public static final int</span> <i class="fg">darkgreen</i><span class="eq">=</span><span class="n">0x7f050002</span>;
        <span class="k">public static final int</span> <i class="fg">darkorange</i><span class="eq">=</span><span class="n">0x7f050003</span>;
        <span class="k">public static final int</span> <i class="fg">green</i><span class="eq">=</span><span class="n">0x7f050004</span>;
        <span class="k">public static final int</span> <i class="fg">orange</i><span class="eq">=</span><span class="n">0x7f050005</span>;
        <span class="k">public static final int</span> <i class="fg">purple</i><span class="eq">=</span><span class="n">0x7f050006</span>;
        <span class="k">public static final int</span> <i class="fg">red</i><span class="eq">=</span><span class="n">0x7f050007</span>;
        <span class="k">public static final int</span> <i class="fg">white</i><span class="eq">=</span><span class="n">0x7f050008</span>;
    }
    <span class="k">public static final class</span> <span class="cg">dimen</span> {
        <span class="k">public static final int</span> <i class="fg">activity_horizontal_margin</i><span class="eq">=</span><span class="n">0x7f040000</span>;
        <span class="k">public static final int</span> <i class="fg">activity_vertical_margin</i><span class="eq">=</span><span class="n">0x7f040001</span>;
    }
    <span class="k">public static final class</span> <span class="cu">id</span> {
        <span class="k">public static final int</span> <i class="fu">action_settings</i><span class="eq">=</span><span class="n">0x7f090002</span>;
        <span class="k">public static final int</span> <i class="fu">geolocation</i><span class="eq">=</span><span class="n">0x7f090000</span>;
        <span class="k">public static final int</span> <i class="fg">registration_date</i><span class="eq">=</span><span class="n">0x7f090001</span>;
    }
    <span class="k">public static final class</span> <span class="cu">layout</span> {
        <span class="k">public static final int</span> <i class="fu">activity_residence</i><span class="eq">=</span><span class="n">0x7f030000</span>;
    }
    <span class="k">public static final class</span> <span class="cu">menu</span> {
        <span class="k">public static final int</span> <i class="fu">myrent</i><span class="eq">=</span><span class="n">0x7f080000</span>;
    }
    <span class="k">public static final class</span> <span class="cg">mipmap</span> {
        <span class="k">public static final int</span> <i class="fg">ic_launcher</i><span class="eq">=</span><span class="n">0x7f020000</span>;
    }
    <span class="k">public static final class</span> <span class="cg">string</span> {
        <span class="k">public static final int</span> <i class="fg">action_settings</i><span class="eq">=</span><span class="n">0x7f060000</span>;
        <span class="k">public static final int</span> <i class="fg">app_name</i><span class="eq">=</span><span class="n">0x7f060001</span>;
        <span class="k">public static final int</span> <i class="fg">geolocation_hint</i><span class="eq">=</span><span class="n">0x7f060002</span>;
        <span class="k">public static final int</span> <i class="fs">registration_date</i><span class="eq">=</span><span class="n">0x7f060003</span>;
        <span class="k">public static final int</span> <i class="fg">title_activity_myrent</i><span class="eq">=</span><span class="n">0x7f060004</span>;</div>
<div style="left:346.5px;top:626.44px;width:432px;height:19.5px;box-sizing:border-box;border:2px solid #72767a;border-radius:10px"></div>
<div style="left:766.5px;top:511.5px;width:170px;height:38px;box-sizing:border-box;border:2px solid #767a7e;border-radius:9px;background:#f3fbea"></div>
<div style="left:774.5px;top:512.2px;width:170px;font-size:15.4px;letter-spacing:0.28px;line-height:38px;color:#2e2e2e;white-space:nowrap">R.id.registration_date</div>
<div style="left:772.9px;top:549px;width:1.3px;height:74px;background:#3aa83a"></div>
<svg style="position:absolute;left:770.4px;top:620.8px" width="7" height="7" viewBox="0 0 7 7"><path d="M0 0 L3.1 1.8 L6.2 0 L3.1 6.4 Z" fill="#3aa83a"/></svg>
<div style="left:1px;top:658px;width:988px;height:6px;background:#fff"></div>
</body></html>
